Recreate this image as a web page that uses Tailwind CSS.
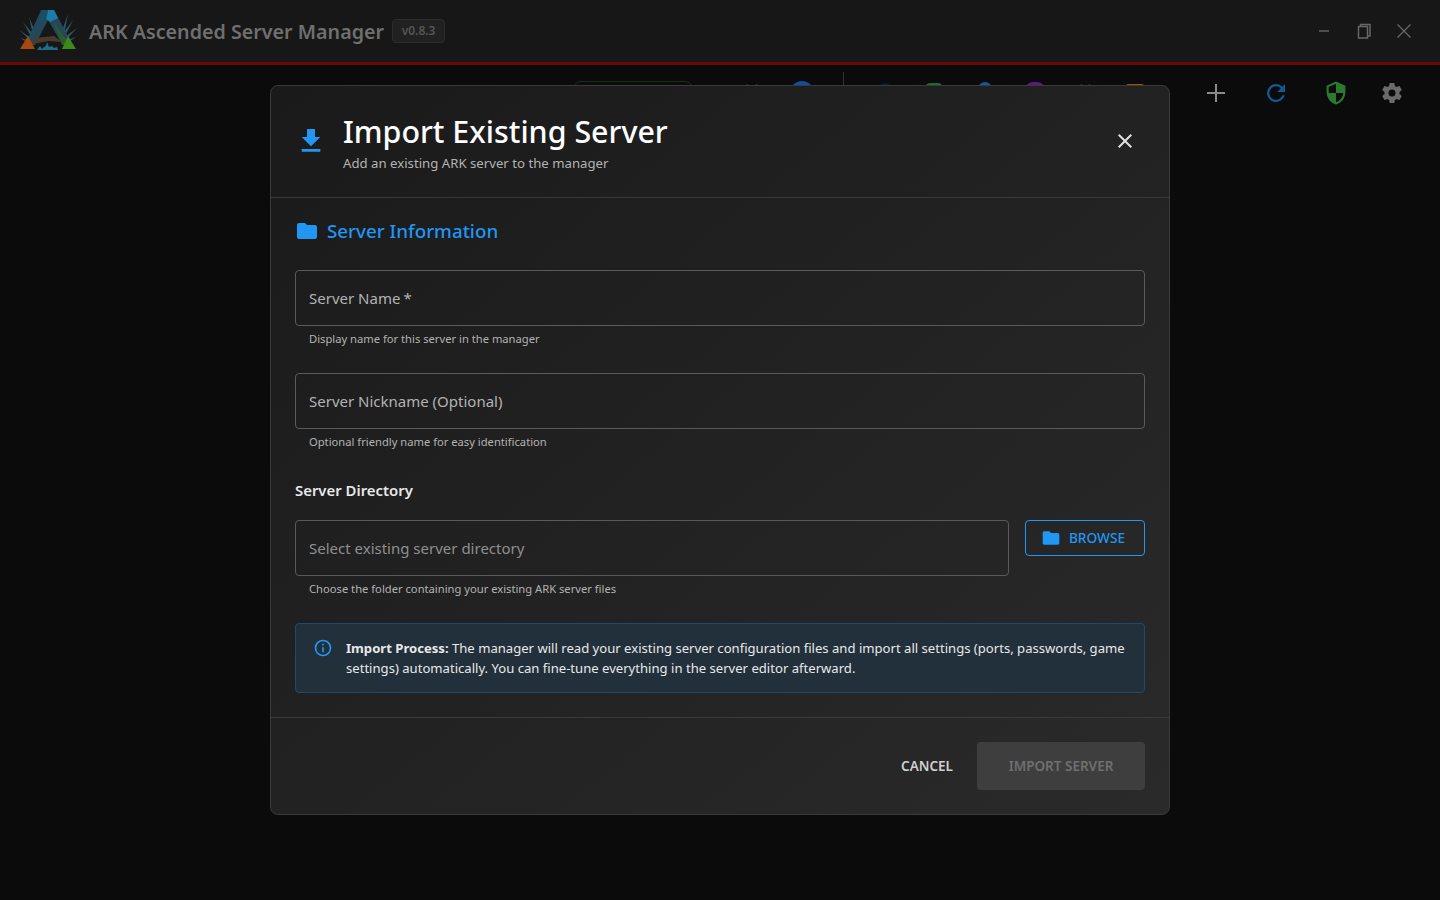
<!DOCTYPE html>
<html lang="en">
  <head>
    <meta charset="UTF-8" />
    <title>ARK Ascended Server Manager</title>
    <script src="https://cdn.jsdelivr.net/npm/@tailwindcss/browser@4"></script>
  </head>
  <body class="h-[900px] w-[1440px] overflow-hidden bg-[#0b0b0b] font-['Noto_Sans',sans-serif] relative">
    <!-- Title bar -->
    <header class="h-[65px] bg-[#171717] border-b-[3px] border-[#6b0707] flex items-center justify-between pl-[18px] pr-[28px]">
      <div class="flex items-center">
        <svg viewBox="0 0 60 44" class="w-[60px] h-[44px] mr-[11px]">
          <path d="M11 8l5 12-1 6zM5 13l9 11 0 5zM1 21l12 8 0 3zM2 29l11 3-1 3zM50 5l-5 14 1 6zM55 11l-9 12 0 6zM59 19l-12 9 0 4zM58 28l-11 4 1 3z" fill="#2a5c68" />
          <path d="M23 1h13l18 34H44L30 11 17 36H7z" fill="#23485a" />
          <path d="M30 1h6l4 8-8 4-4-3z" fill="#1f7ba8" />
          <path d="M24 1h6l-2 9-4 3-3-3z" fill="#1b4f66" />
          <path d="M35 12l17 24H44z" fill="#2f5a30" />
          <path d="M16 29l20-2 8 6-13-1-17 3z" fill="#4a3a2b" />
          <path d="M10 27l7 13H2z" fill="#a8480f" />
          <path d="M50 27l8 13H44z" fill="#3c8a1b" />
          <path d="M19 41l3-4 2 3 2-2 2-1 1-4 2 5 3-1 2 2 3-1 1 3z" fill="#1f6d8a" />
        </svg>
        <h1 class="text-[19.700px] font-semibold text-[#6f6f6f] leading-none mt-[2px]">ARK Ascended Server Manager</h1>
        <span class="ml-2 h-6 w-[53px] flex items-center justify-center rounded border border-[#2c2c2c] bg-[#212121] text-[12px] font-semibold text-[#555555]">v0.8.3</span>
      </div>
      <div class="flex items-center gap-6 text-[#666666]">
        <svg viewBox="0 0 16 16" class="w-4 h-4" fill="none" stroke="currentColor" stroke-width="1.4"><path d="M3 8h10" /></svg>
        <svg viewBox="0 0 16 16" class="w-4 h-4" fill="none" stroke="currentColor" stroke-width="1.500"><path d="M2.500 3.500h9V15h-9zM4.500 3.500V1.500H14V13h-2.500" /></svg>
        <svg viewBox="0 0 16 16" class="w-4 h-4" fill="none" stroke="currentColor" stroke-width="1.3"><path d="M1.500 1.500l13 13M14.500 1.500l-13 13" /></svg>
      </div>
    </header>

    <!-- Toolbar behind the dialog -->
    <div class="h-14 flex items-center justify-end pr-[36px]">
      <div class="flex items-center">
        <svg viewBox="0 0 24 24" class="w-6 h-6" fill="#8a8a8a"><path d="M21 13h-8v8h-2v-8H3v-2h8V3h2v8h8z" /></svg>
        <svg viewBox="1.300 1.300 21.300 21.300" class="w-6 h-6 ml-9" fill="#125a94"><path d="M17.650 6.350A7.960 7.960 0 0 0 12 4a8 8 0 1 0 7.730 10h-2.080A6 6 0 1 1 12 6c1.660 0 3.140.69 4.220 1.780L13 11h7V4z" /></svg>
        <svg viewBox="1.500 .5 21 23" class="w-6 h-6 ml-9"><path d="M12 1L3 5v6c0 5.500 3.800 10.700 9 12 5.200-1.300 9-6.500 9-12V5z" fill="#2b7a2f" /><path d="M12 3.200v8.800H5V6.300zM12 12h7c-.5 4.100-3.300 7.800-7 8.900z" fill="#0c0c0c" /></svg>
        <svg viewBox="0 0 24 24" class="w-6 h-6 ml-8" fill="#6a6a6a"><path d="M19.430 12.980c.04-.32.07-.64.07-.98s-.03-.66-.07-.98l2.110-1.650c.19-.15.240-.42.120-.64l-2-3.460c-.12-.22-.39-.3-.61-.22l-2.490 1c-.52-.4-1.080-.73-1.690-.98l-.38-2.650A.49.49 0 0 0 14 2h-4c-.25 0-.46.18-.49.42l-.38 2.650c-.61.25-1.170.59-1.690.98l-2.490-1c-.23-.09-.49 0-.61.22l-2 3.460c-.13.22-.07.49.12.64l2.110 1.650c-.04.32-.07.65-.07.98s.03.66.07.98l-2.110 1.650c-.19.15-.24.42-.12.64l2 3.460c.12.22.39.3.61.22l2.490-1c.52.4 1.080.73 1.690.98l.38 2.650c.03.24.24.42.49.42h4c.25 0 .46-.18.49-.42l.38-2.650c.61-.25 1.170-.59 1.690-.98l2.490 1c.23.09.49 0 .61-.22l2-3.460c.12-.22.07-.49-.12-.64zM12 15.500a3.500 3.500 0 1 1 0-7 3.500 3.500 0 0 1 0 7z" /></svg>
      </div>
    </div>

    <!-- Toolbar items peeking above the dialog -->
    <div class="absolute left-[573px] top-[81px] w-[120px] h-6 rounded-lg border border-[#16301a]"></div>
    <div class="absolute left-[746px] top-[84px] w-[3px] h-[3px] rounded-full bg-[#2a2a5a]"></div>
    <div class="absolute left-[755px] top-[84px] w-[3px] h-[3px] rounded-full bg-[#2a2a5a]"></div>
    <div class="absolute left-[790px] top-[81px] w-6 h-6 rounded-full bg-[#0f4fa0]"></div>
    <div class="absolute left-[843px] top-[72px] w-px h-7 bg-[#333333]"></div>
    <div class="absolute left-[877px] top-[83px] w-4 h-4 rounded-full bg-[#0a1a33]"></div>
    <div class="absolute left-[926px] top-[83px] w-4 h-4 rounded-t bg-[#1f6b2e]"></div>
    <div class="absolute left-[978px] top-[82px] w-[14px] h-4 rounded-full bg-[#0f5a9e]"></div>
    <div class="absolute left-[1025px] top-[82px] w-5 h-4 rounded-full bg-[#5a1a82]"></div>
    <div class="absolute left-[1080px] top-[84px] w-[3px] h-[3px] rounded-full bg-[#2a2a5a]"></div>
    <div class="absolute left-[1088px] top-[84px] w-[3px] h-[3px] rounded-full bg-[#2a2a5a]"></div>
    <div class="absolute left-[1125px] top-[84px] w-5 h-4 rounded-t-sm bg-[#8a5a10]"></div>

    <!-- Import dialog -->
    <div class="absolute left-[270px] top-[85px] w-[900px] h-[730px] rounded-lg border border-[#3a3a3a] bg-gradient-to-br from-[#1a1a1a] to-[#2a2a2a] flex flex-col">
      <div class="h-[112px] pl-6 pr-[32px] border-b border-[#383838] flex items-center justify-between shrink-0">
        <div class="flex items-center">
          <svg viewBox="0 0 24 24" class="w-8 h-8 -mt-[1px]" fill="#2196f3"><path d="M19 9h-4V3H9v6H5l7 7zM5 18v2h14v-2z" /></svg>
          <div class="ml-4 mt-[3px]">
            <h2 class="text-[30.400px] font-medium text-white leading-[36px]">Import Existing Server</h2>
            <p class="text-[13.200px] text-[#b3b3b3] leading-[20px] mt-[3px]">Add an existing ARK server to the manager</p>
          </div>
        </div>
        <svg viewBox="0 0 24 24" class="w-6 h-6 mt-[-1px]" fill="#e0e0e0"><path d="M19 6.410 17.590 5 12 10.590 6.410 5 5 6.410 10.590 12 5 17.590 6.410 19 12 13.410 17.590 19 19 17.590 13.410 12z" /></svg>
      </div>

      <div class="flex-1 px-6 pt-[20px]">
        <div class="flex items-center h-[26px]">
          <svg viewBox="0 0 24 24" class="w-6 h-6 -mt-[1px]" fill="#2196f3"><path d="M10 4H4c-1.100 0-2 .9-2 2v12c0 1.100.9 2 2 2h16c1.100 0 2-.9 2-2V8c0-1.100-.9-2-2-2h-8z" /></svg>
          <h3 class="ml-2 text-[18.800px] font-medium text-[#2196f3]">Server Information</h3>
        </div>

        <div class="mt-[26px] h-14 rounded border border-[#5a5a5a] px-[13px] flex items-center text-[15px] text-[#b3b3b3]">Server Name<span class="ml-[3px]">*</span></div>
        <p class="mt-[5px] ml-[14px] text-[11.200px] leading-4 text-[#b3b3b3]">Display name for this server in the manager</p>

        <div class="mt-[26px] h-14 rounded border border-[#5a5a5a] px-[13px] flex items-center text-[15px] text-[#b3b3b3]">Server Nickname (Optional)</div>
        <p class="mt-[5px] ml-[14px] text-[11.200px] leading-4 text-[#b3b3b3]">Optional friendly name for easy identification</p>

        <h4 class="mt-[28px] text-[14.900px] leading-6 font-semibold text-[#e8e8e8]">Server Directory</h4>

        <div class="mt-[18px] flex gap-4 items-start">
          <div class="flex-1">
            <div class="h-14 rounded border border-[#5a5a5a] px-[13px] flex items-center text-[15px] text-[#8f8f8f]">Select existing server directory</div>
            <p class="mt-[5px] ml-[14px] text-[11.200px] leading-4 text-[#b3b3b3]">Choose the folder containing your existing ARK server files</p>
          </div>
          <div class="w-[120px] h-9 rounded border border-[#2196f3] pr-1 flex items-center justify-center text-[13.700px] font-medium text-[#2196f3]">
            <svg viewBox="0 0 24 24" class="w-5 h-5 mr-2" fill="#2196f3"><path d="M10 4H4c-1.100 0-2 .9-2 2v12c0 1.100.9 2 2 2h16c1.100 0 2-.9 2-2V8c0-1.100-.9-2-2-2h-8z" /></svg>
            BROWSE
          </div>
        </div>

        <div class="mt-[26px] h-[70px] rounded border border-[#1c4a73] bg-[#22303c] pl-[17px] pr-2 flex items-start pt-[14px]">
          <svg viewBox="0 0 24 24" class="w-5 h-5 shrink-0" fill="#2196f3"><path d="M11 7h2v2h-2zm0 4h2v6h-2zm1-9a10 10 0 1 0 0 20 10 10 0 0 0 0-20zm0 18a8 8 0 1 1 0-16 8 8 0 0 1 0 16z" /></svg>
          <p class="ml-[13px] text-[13.100px] leading-[20px] text-[#e8e8e8]"><b class="font-bold">Import Process:</b> The manager will read your existing server configuration files and import all settings (ports, passwords, game settings) automatically. You can fine-tune everything in the server editor afterward.</p>
        </div>
      </div>

      <div class="h-[97px] border-t border-[#3a3a3a] px-6 flex items-center justify-end shrink-0">
        <span class="text-[13.500px] font-semibold text-[#cfcfcf] mr-6">CANCEL</span>
        <div class="w-[168px] h-12 rounded bg-[#3e3e3e] flex items-center justify-center text-[13.500px] font-semibold text-[#6f6f6f]">IMPORT SERVER</div>
      </div>
    </div>
  </body>
</html>
